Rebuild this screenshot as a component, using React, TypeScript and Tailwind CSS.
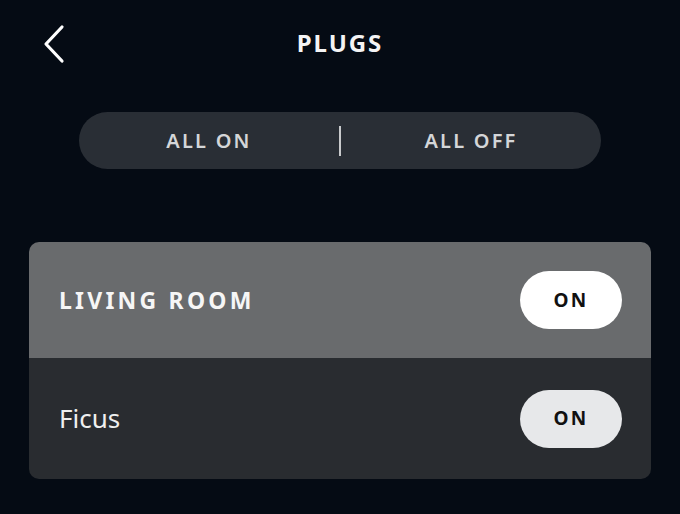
export default function App() {
  return (
    <div className="w-[680px] h-[514px] bg-[#050b14] font-['Noto_Sans',sans-serif] text-white overflow-hidden">
      <div className="relative h-[86px] flex items-center justify-center">
        <button className="absolute left-[37px] top-[20px] p-1">
          <svg width="26" height="40" viewBox="0 0 26 40" fill="none" stroke="#ffffff" strokeWidth="3.2" strokeLinecap="round" strokeLinejoin="round">
            <path d="M21 3 L5 20 L21 37" />
          </svg>
        </button>
        <h1 className="text-[24px] font-bold tracking-[0.08em] leading-none text-[#f4f4f4]">PLUGS</h1>
      </div>

      <div className="mx-[79px] mt-[26px] h-[57px] rounded-full bg-[#292e35] flex items-center">
        <button className="flex-1 text-[20px] font-semibold tracking-[0.11em] text-[#d4d6d8] leading-none">ALL ON</button>
        <div className="w-[2px] h-[30px] bg-[#c8cacc]" />
        <button className="flex-1 text-[20px] font-semibold tracking-[0.11em] text-[#d4d6d8] leading-none">ALL OFF</button>
      </div>

      <div className="mx-[29px] mt-[73px] rounded-[10px] overflow-hidden">
        <div className="h-[116px] bg-[#696b6d] flex items-center justify-between pl-[30px] pr-[29px]">
          <span className="text-[23px] font-bold tracking-[0.14em] text-[#f6f6f6]">LIVING ROOM</span>
          <button className="w-[102px] h-[58px] rounded-full bg-white text-[19px] font-bold tracking-[0.12em] text-[#111]">ON</button>
        </div>
        <div className="h-[121px] bg-[#292c30] flex items-center justify-between pl-[30px] pr-[29px]">
          <span className="text-[26px] text-[#efefef]">Ficus</span>
          <button className="w-[102px] h-[58px] rounded-full bg-[#e7e8ea] text-[19px] font-bold tracking-[0.12em] text-[#111]">ON</button>
        </div>
      </div>
    </div>
  );
}
